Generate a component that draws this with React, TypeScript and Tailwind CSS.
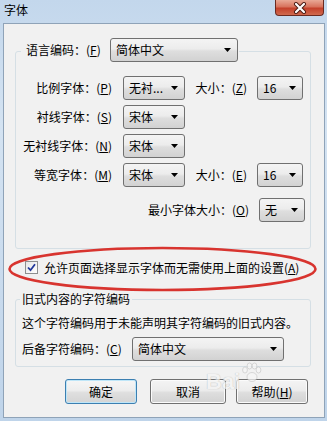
import React from "react";

const Arrow = () => (
  <svg width="7" height="4" viewBox="0 0 7 4" className="shrink-0">
    <path d="M0 0H7L3.5 4Z" fill="#000" />
  </svg>
);

function Select({ cls, text }: { cls: string; text: string }) {
  return (
    <div
      className={
        cls +
        " h-[24px] shrink-0 flex items-center justify-between pl-[5px] pr-[6px] rounded-[3px] border border-[#707070] bg-[linear-gradient(#f4f4f4,#ececec_45%,#dedede_55%,#d2d2d2)] leading-[14px]"
      }
    >
      <span className="whitespace-nowrap">{text}</span>
      <Arrow />
    </div>
  );
}

function Label({ cls, text, k }: { cls: string; text: string; k: string }) {
  return (
    <div className={cls + " shrink-0 whitespace-nowrap leading-[14px]"}>
      {text}：(<span className="underline">{k}</span>)
    </div>
  );
}

function Button({ cls, children, def }: { cls: string; children: React.ReactNode; def?: boolean }) {
  return (
    <div
      className={
        cls +
        " h-[25px] shrink-0 flex items-center justify-center rounded-[3px] leading-[14px] " +
        (def
          ? "border border-[#3c7fb1] shadow-[inset_0_0_0_1px_#bfe6f8] bg-[linear-gradient(#f6f6f6,#ededed_45%,#dfdfdf_55%,#d4d4d4)]"
          : "border border-[#707070] shadow-[inset_0_0_0_1px_#fbfbfb] bg-[linear-gradient(#f4f4f4,#ececec_45%,#dedede_55%,#d2d2d2)]")
      }
    >
      {children}
    </div>
  );
}

export default function App() {
  return (
    <div className="relative w-[327px] h-[421px] overflow-hidden bg-[linear-gradient(180deg,#c3d7ec,#d4e3f2_30%,#c8daed_70%,#bfd4ea)] font-['Noto_Sans_CJK_SC','Microsoft_YaHei',sans-serif] text-[12px] text-black">
      {/* title bar */}
      <div className="h-[23px] flex items-start">
        <div className="pl-[4px] pt-[3px] leading-[14px] text-[12px]">字体</div>
        <div className="ml-auto mr-[3px] w-[49px] h-[16px] rounded-b-[4px] border border-t-0 border-[#6b2a20] bg-[linear-gradient(#e9a996,#d8735d_45%,#c4412b_55%,#d06a4f)] flex items-center justify-center">
          <svg width="14" height="12" viewBox="0 0 14 12">
            <path d="M3 2L11 10M11 2L3 10" stroke="#4a1a12" strokeWidth="4" strokeLinecap="round" />
            <path d="M3 2L11 10M11 2L3 10" stroke="#ffffff" strokeWidth="2.2" strokeLinecap="round" />
          </svg>
        </div>
      </div>

      {/* client */}
      <div className="ml-[3px] w-[322px] h-[395px] border border-[#8fa3b8] bg-[#f1f1f1] flex flex-col">
        {/* group 1 */}
        <div className="mt-[27px] ml-[11px] w-[296px] h-[198px] shrink-0 rounded-[3px] border border-[#d5dfe5] flex flex-col">
          <div className="-mt-[14px] ml-[5px] w-fit flex items-center bg-[#f1f1f1] pl-[5px] pr-[1px]">
            <Label cls="w-[84px]" text="语言编码" k="F" />
            <Select cls="w-[128px]" text="简体中文" />
          </div>
          <div className="mt-[14px] flex flex-col gap-[5px]">
            <div className="h-[24px] flex items-center">
              <Label cls="w-[96px] text-right" text="比例字体" k="P" />
              <Select cls="ml-[11px] w-[62px]" text="无衬..." />
              <Label cls="w-[62px] text-right" text="大小" k="Z" />
              <Select cls="ml-[10px] w-[46px]" text="16" />
            </div>
            <div className="h-[24px] flex items-center">
              <Label cls="w-[96px] text-right" text="衬线字体" k="S" />
              <Select cls="ml-[11px] w-[62px]" text="宋体" />
            </div>
            <div className="h-[24px] flex items-center">
              <Label cls="w-[96px] text-right" text="无衬线字体" k="N" />
              <Select cls="ml-[11px] w-[62px]" text="宋体" />
            </div>
            <div className="h-[24px] flex items-center">
              <Label cls="w-[96px] text-right" text="等宽字体" k="M" />
              <Select cls="ml-[11px] w-[62px]" text="宋体" />
              <Label cls="w-[62px] text-right" text="大小" k="E" />
              <Select cls="ml-[10px] w-[46px]" text="16" />
            </div>
            <div className="mt-[6px] h-[24px] flex items-center justify-end pr-[5px]">
              <Label cls="" text="最小字体大小" k="O" />
              <Select cls="ml-[10px] w-[46px]" text="无" />
            </div>
          </div>
        </div>

        {/* checkbox */}
        <div className="mt-[12px] ml-[21px] h-[13px] flex items-center shrink-0">
          <div className="w-[13px] h-[13px] shrink-0 border border-[#8e8f8f] bg-[linear-gradient(135deg,#e6e6e6,#ffffff)] flex items-center justify-center">
            <svg width="9" height="9" viewBox="0 0 9 9">
              <path d="M1 4.5L3.5 7.2L8 1.2" stroke="#21379a" strokeWidth="1.8" fill="none" />
            </svg>
          </div>
          <div className="ml-[6px] whitespace-nowrap leading-[14px]">
            允许页面选择显示字体而无需使用上面的设置(<span className="underline">A</span>)
          </div>
        </div>

        {/* group 2 */}
        <div className="mt-[25px] ml-[11px] w-[296px] h-[68px] shrink-0 rounded-[3px] border border-[#d5dfe5] flex flex-col">
          <div className="-mt-[8px] ml-[4px] w-fit px-[2px] bg-[#f1f1f1] leading-[14px] whitespace-nowrap">
            旧式内容的字符编码
          </div>
          <div className="mt-[10px] ml-[6px] leading-[14px] whitespace-nowrap">
            这个字符编码用于未能声明其字符编码的旧式内容。
          </div>
          <div className="mt-[7px] ml-[6px] flex items-center">
            <Label cls="w-[110px]" text="后备字符编码" k="C" />
            <Select cls="w-[152px]" text="简体中文" />
          </div>
        </div>

        {/* buttons */}
        <div className="mt-[12px] flex items-center shrink-0">
          <Button cls="ml-[61px] w-[72px]" def>
            确定
          </Button>
          <Button cls="ml-[13px] w-[76px]">取消</Button>
          <Button cls="ml-[10px] w-[72px]">
            帮助(<span className="underline">H</span>)
          </Button>
        </div>
      </div>

      {/* watermark paw */}
      <svg className="absolute left-[240px] top-[362px] pointer-events-none opacity-70" width="22" height="22" viewBox="0 0 22 22">
        <g fill="#f6f6f6" stroke="#b0b0b0" strokeWidth="0.6">
          <ellipse cx="5" cy="8" rx="2.4" ry="3" />
          <ellipse cx="9.5" cy="4" rx="2.4" ry="3" />
          <ellipse cx="14.5" cy="4" rx="2.4" ry="3" />
          <ellipse cx="18.5" cy="8" rx="2.4" ry="3" />
          <ellipse cx="12" cy="15" rx="5" ry="4.5" />
        </g>
      </svg>
      <div className="absolute left-[206px] top-[370px] text-[22px] font-bold leading-[24px] text-[#f4f4f4] opacity-70 [text-shadow:0_0_1px_#9a9a9a] font-['Liberation_Sans',sans-serif] pointer-events-none">
        Bai
      </div>

      {/* red ellipse */}
      <svg className="absolute left-0 top-0 pointer-events-none" width="327" height="421" viewBox="0 0 327 421">
        <ellipse cx="162.5" cy="269" rx="153" ry="21" fill="none" stroke="#d8342f" strokeWidth="2.6" />
      </svg>
    </div>
  );
}
